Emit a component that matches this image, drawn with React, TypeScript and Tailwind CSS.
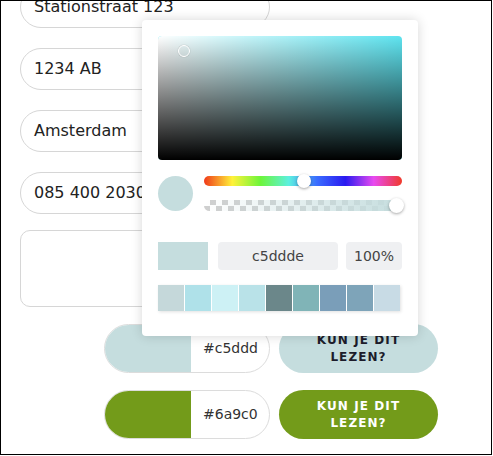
import React from "react";

const swatches = [
  "#c5d8da",
  "#afe1e9",
  "#cdf1f5",
  "#b9e2e8",
  "#6b878a",
  "#80b4b7",
  "#7a9eb9",
  "#7ea4b9",
  "#c8dbe5",
];

function TextField({ value }: { value: string }) {
  return (
    <div className="h-[42px] w-[250px] rounded-full border border-[#d6d6d6] bg-white flex items-center px-[13px] text-[16px] text-[#222]">
      {value}
    </div>
  );
}

function ColorRow({ color, hex, text }: { color: string; hex: string; text: string }) {
  return (
    <div className="flex gap-[9px]">
      <div className="flex h-[49px] w-[166px] rounded-full border border-[#dcdcdc] overflow-hidden bg-white">
        <div className="w-[86px] h-full" style={{ backgroundColor: color }} />
        <div className="flex-1 flex items-center pl-[12px] pr-[11px] overflow-hidden">
          <span className="block overflow-hidden whitespace-nowrap text-[14px] text-[#333]">{hex}</span>
        </div>
      </div>
      <button
        className="h-[49px] w-[159px] rounded-full flex items-center justify-center text-center text-[12px] leading-[17px] font-bold tracking-[0.09em] uppercase"
        style={{ backgroundColor: color, color: text }}
      >
        Kun je dit
        <br />
        lezen?
      </button>
    </div>
  );
}

function Picker() {
  return (
    <div className="absolute left-[141px] top-[19px] w-[276px] bg-white rounded-[4px] shadow-[0_0_12px_rgba(0,0,0,0.16)] px-4 pt-4 pb-[25px]">
      {/* saturation / value field */}
      <div className="relative h-[124px] rounded-[4px] overflow-hidden bg-[#5ee4f0]">
        <div className="absolute inset-0 bg-gradient-to-r from-white to-transparent" />
        <div className="absolute inset-0 bg-gradient-to-b from-transparent to-black" />
        <div className="absolute left-[20px] top-[9px] w-[12px] h-[12px] rounded-full border-[1.5px] border-white shadow-[0_0_1px_rgba(0,0,0,0.4)]" />
      </div>

      {/* preview + sliders */}
      <div className="mt-4 flex items-center gap-[11px]">
        <div className="w-[35px] h-[35px] rounded-full bg-[#c5ddde]" />
        <div className="flex-1 flex flex-col">
          <div className="h-[10px] rounded-full bg-[linear-gradient(to_right,#f03a1a,#fff23a,#6cf53a,#5cf0e0,#3a6cff,#2a1af0,#e84af0,#f03a2a)]" />
          <div className="relative -mt-[10px] h-[10px]">
            <div className="absolute left-[93px] -top-[2px] w-[14px] h-[14px] rounded-full bg-white shadow-[0_1px_3px_rgba(0,0,0,0.35)]" />
          </div>
          <div className="relative mt-[14px] h-[11px] rounded-full overflow-hidden bg-[repeating-conic-gradient(#cfcfcf_0%_25%,#ffffff_0%_50%)] bg-[length:12px_11px]">
            <div className="absolute inset-0 bg-gradient-to-r from-transparent to-[#c5ddde]" />
          </div>
          <div className="relative -mt-[11px] h-[11px]">
            <div className="absolute right-[-2px] -top-[2px] w-[15px] h-[15px] rounded-full bg-white shadow-[0_1px_3px_rgba(0,0,0,0.35)]" />
          </div>
        </div>
      </div>

      {/* value inputs */}
      <div className="mt-[31px] flex h-[28px]">
        <div className="w-[50px] h-full bg-[#c5ddde]" />
        <div className="ml-[10px] w-[120px] h-full rounded-[4px] bg-[#eff0f2] flex items-center justify-center text-[14px] text-[#444]">
          c5ddde
        </div>
        <div className="ml-[8px] w-[56px] h-full rounded-[4px] bg-[#eff0f2] flex items-center justify-center text-[14px] text-[#444]">
          100%
        </div>
      </div>

      {/* presets */}
      <div className="mt-[15px] grid grid-cols-9 gap-px w-[242px] h-[26px] shadow-[1px_1px_3px_rgba(0,0,0,0.12)]">
        {swatches.map((c) => (
          <div key={c} style={{ backgroundColor: c }} />
        ))}
      </div>
    </div>
  );
}

export default function App() {
  return (
    <div className="relative w-[492px] h-[455px] border border-black overflow-hidden bg-white font-['DejaVu_Sans',sans-serif]">
      <div className="-mt-[15px] pl-[19px] flex flex-col">
        <div className="flex flex-col gap-5">
          <TextField value="Stationstraat 123" />
          <TextField value="1234 AB" />
          <TextField value="Amsterdam" />
          <TextField value="085 400 2030" />
        </div>
        <div className="mt-4 h-[77px] w-[250px] rounded-[10px] border border-[#d6d6d6]" />
        <div className="mt-[17px] ml-[84px] flex flex-col gap-[17px]">
          <ColorRow color="#c5ddde" hex="#c5ddde" text="#1c1c2b" />
          <ColorRow color="#739b1a" hex="#6a9c09" text="#ffffff" />
        </div>
      </div>
      <Picker />
    </div>
  );
}
